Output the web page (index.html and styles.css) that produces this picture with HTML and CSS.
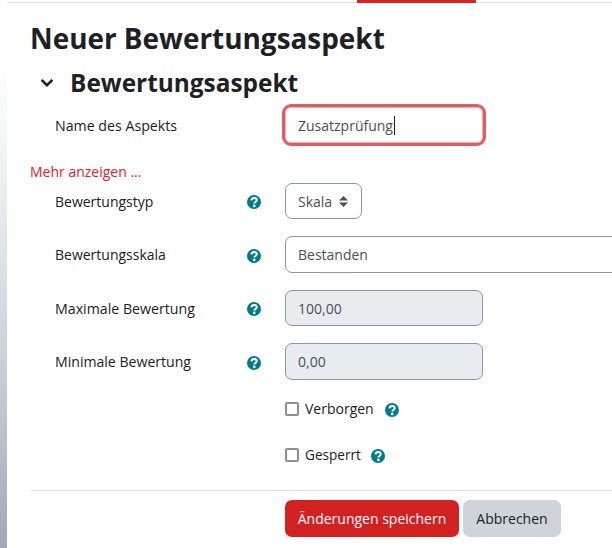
FILE: index.html
```html
<!DOCTYPE html>
<html lang="de">
<head>
<meta charset="utf-8">
<title>Neuer Bewertungsaspekt</title>
<link rel="stylesheet" href="styles.css">
</head>
<body>
<div class="page">
  <div class="strip"></div>
  <div class="main">
    <div class="topline"><div class="topmark"></div></div>
    <h1 class="title">Neuer Bewertungsaspekt</h1>
    <div class="section-head">
      <svg class="chevron" viewBox="0 0 14 10" width="14" height="10"><path d="M1.6 1.8 7 7.2l5.4-5.4" fill="none" stroke="#1d2125" stroke-width="2.6"/></svg>
      <h2 class="section-title">Bewertungsaspekt</h2>
    </div>
    <div class="row row-name">
      <label class="label">Name des Aspekts</label>
      <div class="control"><div class="field focus">Zusatzprüfung<span class="caret"></span></div></div>
    </div>
    <div class="more"><a class="more-link">Mehr anzeigen ...</a></div>
    <div class="row row-type">
      <label class="label narrow">Bewertungstyp</label>
      <svg class="help" viewBox="0 0 14 14"><circle cx="7" cy="7" r="7" fill="#007a8f"/><path d="M4.500 5.400C4.600 3.800 5.700 2.900 7.100 2.900c1.500 0 2.600.9 2.600 2.200 0 2-2.300 1.800-2.300 3.400" fill="none" stroke="#fff" stroke-width="2"/><circle cx="7.300" cy="10.900" r="1.300" fill="#fff"/></svg>
      <div class="control"><div class="field select">Skala<svg class="updown" viewBox="0 0 9 11" width="9" height="11"><path d="M4.500 0 9 4.500H0zM4.500 11 0 6.500h9z" fill="#495057"/></svg></div></div>
    </div>
    <div class="row row-scale">
      <label class="label narrow">Bewertungsskala</label>
      <svg class="help" viewBox="0 0 14 14"><circle cx="7" cy="7" r="7" fill="#007a8f"/><path d="M4.500 5.400C4.600 3.800 5.700 2.900 7.100 2.900c1.500 0 2.600.9 2.600 2.200 0 2-2.300 1.800-2.300 3.400" fill="none" stroke="#fff" stroke-width="2"/><circle cx="7.300" cy="10.900" r="1.300" fill="#fff"/></svg>
      <div class="control"><div class="field wide">Bestanden</div></div>
    </div>
    <div class="row row-max">
      <label class="label">Maximale Bewertung</label>
      <svg class="help" viewBox="0 0 14 14"><circle cx="7" cy="7" r="7" fill="#007a8f"/><path d="M4.500 5.400C4.600 3.800 5.700 2.900 7.100 2.900c1.500 0 2.600.9 2.600 2.200 0 2-2.300 1.800-2.300 3.400" fill="none" stroke="#fff" stroke-width="2"/><circle cx="7.300" cy="10.900" r="1.300" fill="#fff"/></svg>
      <div class="control"><div class="field disabled">100,00</div></div>
    </div>
    <div class="row row-min">
      <label class="label mid">Minimale Bewertung</label>
      <svg class="help" viewBox="0 0 14 14"><circle cx="7" cy="7" r="7" fill="#007a8f"/><path d="M4.500 5.400C4.600 3.800 5.700 2.900 7.100 2.900c1.500 0 2.600.9 2.600 2.200 0 2-2.300 1.800-2.300 3.400" fill="none" stroke="#fff" stroke-width="2"/><circle cx="7.300" cy="10.900" r="1.300" fill="#fff"/></svg>
      <div class="control"><div class="field disabled short">0,00</div></div>
    </div>
    <div class="check check-first">
      <span class="box"></span><span class="check-label">Verborgen</span>
      <svg class="help" viewBox="0 0 14 14"><circle cx="7" cy="7" r="7" fill="#007a8f"/><path d="M4.500 5.400C4.600 3.800 5.700 2.900 7.100 2.900c1.500 0 2.600.9 2.600 2.200 0 2-2.300 1.800-2.300 3.400" fill="none" stroke="#fff" stroke-width="2"/><circle cx="7.300" cy="10.900" r="1.300" fill="#fff"/></svg>
    </div>
    <div class="check check-second">
      <span class="box"></span><span class="check-label">Gesperrt</span>
      <svg class="help" viewBox="0 0 14 14"><circle cx="7" cy="7" r="7" fill="#007a8f"/><path d="M4.500 5.400C4.600 3.800 5.700 2.900 7.100 2.900c1.500 0 2.600.9 2.600 2.200 0 2-2.300 1.800-2.300 3.400" fill="none" stroke="#fff" stroke-width="2"/><circle cx="7.300" cy="10.900" r="1.300" fill="#fff"/></svg>
    </div>
    <div class="actions">
      <button class="btn save">Änderungen speichern</button>
      <button class="btn cancel">Abbrechen</button>
    </div>
  </div>
</div>
</body>
</html>
```

FILE: styles.css
```css
html, body {
  margin: 0;
  padding: 0;
  width: 612px;
  height: 548px;
  overflow: hidden;
  background: #fff;
}
body {
  font-family: "Open Sans", "Noto Sans", sans-serif;
  font-size: 14px;
  color: #1d2125;
}
.page {
  display: flex;
  height: 548px;
}
.strip {
  width: 7px;
  flex: none;
  background: linear-gradient(#fff 60px, #f2f4f6 150px, #c8d0d6 370px, #9dabb4 548px);
}
.main {
  flex: 1;
  min-width: 0;
  padding-left: 23px;
}
.topline {
  height: 1px;
  padding-top: 2px;
  margin-left: -23px;
  position: relative;
  background: linear-gradient(#fff 2px, #e1e1ea 2px);
}
.topmark {
  position: absolute;
  left: 350px;
  top: 0;
  width: 119px;
  height: 3px;
  background: #d92222;
}
.title {
  margin: 16px 0 0 0;
  font-size: 27.9px;
  line-height: 38px;
  font-weight: 700;
}
.section-head {
  display: flex;
  align-items: center;
  height: 34px;
  margin-top: 9px;
  margin-left: 10px;
}
.chevron { flex: none; }
.section-title {
  margin: 0 0 0 16px;
  font-size: 24.4px;
  line-height: 34px;
  font-weight: 700;
}
.row {
  display: flex;
  align-items: center;
  padding-left: 25px;
}
.label {
  width: 192px;
  flex: none;
  font-size: 14.2px;
}
.label.narrow { font-size: 14px; }
.label.mid { font-size: 14.1px; }
.help {
  width: 14px;
  height: 14px;
  flex: none;
  margin-top: 2px;
}
.row .help { margin-left: -0.5px; }
.control {
  margin-left: 24.500px;
  flex: 1;
  min-width: 0;
}
.field {
  box-sizing: border-box;
  height: 36px;
  width: 198px;
  padding: 0 12px;
  display: flex;
  align-items: center;
  border: 1px solid #8f959e;
  border-radius: 7px;
  background: #fff;
  color: #495057;
}
.row-name { margin-top: 7px; }
.row-name .label { width: 230px; }
.row-name .control { margin-left: 0; }
.field.focus {
  width: 198px;
  border-color: #eeb0b0;
  outline: 3px solid #e05c60;
  outline-offset: 0;
  border-radius: 6px;
}
.caret {
  width: 1px;
  height: 19px;
  margin-left: 1px;
  background: #1d2125;
}
.more {
  margin-top: 19px;
  line-height: 19px;
}
.more-link { color: #e2202c; }
.row-type { margin-top: 2px; }
.field.select {
  width: 77px;
  gap: 7px;
}
.updown { flex: none; }
.row-scale { margin-top: 17px; }
.field.wide {
  width: 340px;
  height: 37px;
}
.row-max { margin-top: 17px; }
.row-min { margin-top: 17px; }
.field.short { height: 37px; }
.field.disabled { background: #e9ecef; }
.check {
  display: flex;
  align-items: center;
  padding-left: 255px;
}
.check-first { margin-top: 19px; }
.check-second { margin-top: 26px; }
.check-second .check-label { margin-right: 10px; font-size: 13.6px; }
.box {
  box-sizing: border-box;
  width: 14px;
  height: 14px;
  flex: none;
  border: 2px solid #8f8f9d;
  border-radius: 2px;
  background: #fff;
}
.check-label {
  margin: 0 11px 0 6px;
  line-height: 20px;
}
.actions {
  display: flex;
  gap: 4px;
  margin-top: 25px;
  padding: 9px 0 0 255px;
  border-top: 1px solid #e0e3e8;
}
.btn {
  height: 37px;
  border: 0;
  border-radius: 7px;
  font: inherit;
  padding: 0;
}
.save {
  width: 174px;
  background: #d32121;
  color: #fff;
}
.cancel {
  width: 98px;
  background: #ced4da;
  color: #1d2125;
}
```
